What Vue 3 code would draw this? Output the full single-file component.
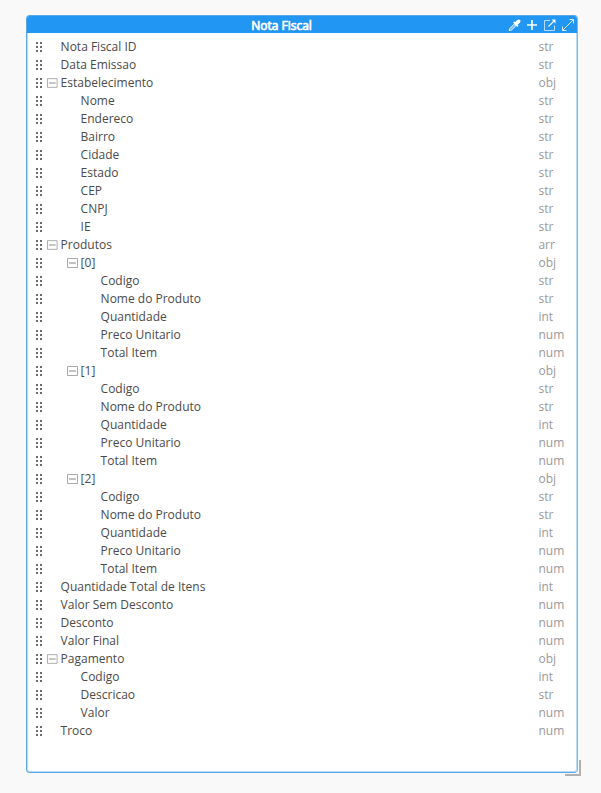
<script setup>
const item = ['Codigo:str', 'Nome do Produto:str', 'Quantidade:int', 'Preco Unitario:num', 'Total Item:num']
const make = (depth, list) => list.map((s) => {
  const [name, type] = s.split(':')
  return { depth, name, type, open: type === 'obj' || type === 'arr' }
})
const rows = [
  ...make(0, ['Nota Fiscal ID:str', 'Data Emissao:str', 'Estabelecimento:obj']),
  ...make(1, ['Nome:str', 'Endereco:str', 'Bairro:str', 'Cidade:str', 'Estado:str', 'CEP:str', 'CNPJ:str', 'IE:str']),
  ...make(0, ['Produtos:arr']),
  ...[0, 1, 2].flatMap((i) => [...make(1, [`[${i}]:obj`]), ...make(2, item)]),
  ...make(0, ['Quantidade Total de Itens:int', 'Valor Sem Desconto:num', 'Desconto:num', 'Valor Final:num', 'Pagamento:obj']),
  ...make(1, ['Codigo:int', 'Descricao:str', 'Valor:num']),
  ...make(0, ['Troco:num']),
]
</script>

<template>
  <main class="page">
    <section class="panel">
      <header class="bar">
        <h1 class="title">Nota Fiscal</h1>
        <div class="tools">
          <svg width="13" height="14" viewBox="0 0 13 14">
            <path d="M1 12.7 1.8 10.4 6 6.2 7.8 8 3.5 12Z" fill="#7cc0f9" stroke="#d9edfd" stroke-width="1" />
            <path d="M5 4.6 6.3 3.4 7.2 4.1 9.2 2Q10.8.8 12 2 13.1 3.3 11.8 4.7L9.8 6.6 10.5 7.7 9.3 9Z" fill="#fff" />
          </svg>
          <svg width="12" height="14" viewBox="0 0 12 14">
            <path d="M6 2V12M1 7H11" stroke="#fff" stroke-width="1.6" fill="none" />
          </svg>
          <svg width="13" height="14" viewBox="0 0 13 14">
            <path d="M7 2.5H1.5V12.5H11.5V7.5" stroke="#b9dcfb" stroke-width="1" fill="none" />
            <path d="M5.5 8.5 11.5 2.5" stroke="#fff" stroke-width="1.1" fill="none" />
            <path d="M8.5 1.5H12.5V5.5Z" fill="#fff" />
          </svg>
          <svg width="14" height="14" viewBox="0 0 14 14">
            <path d="M1.5 12.5 12.5 1.5M8.5 1.5H12.5V5.5M1.5 8.5V12.5H5.5" stroke="#d4eafd" stroke-width="1" fill="none" />
          </svg>
        </div>
      </header>
      <ul class="list">
        <li v-for="(r, i) in rows" :key="i" class="row">
          <svg class="grip" width="7" height="12" viewBox="0 0 7 12" fill="#6a6a6a">
            <path d="M0 1h2v2h-2zM4 1h2v2h-2zM0 5h2v2h-2zM4 5h2v2h-2zM0 9h2v2h-2zM4 9h2v2h-2z" />
          </svg>
          <span class="toggle" :class="'d' + r.depth">
            <svg v-if="r.open" width="11" height="12" viewBox="0 -1 11 12" fill="none">
              <path d="M.5.5H10.5V9.5H.5Z" stroke="#aaa" />
              <path d="M2 5H9" stroke="#888" />
            </svg>
          </span>
          <span class="name">{{ r.name }}</span>
          <span class="type">{{ r.type }}</span>
        </li>
      </ul>
      <svg class="resize" width="16" height="16" viewBox="0 0 16 16" fill="none">
        <path d="M15 0V15H0" stroke="#b0b0b0" stroke-width="2" />
      </svg>
    </section>
  </main>
</template>

<style>
body { background: #f9f9f9; }
</style>

<style scoped>
.page {
  box-sizing: border-box;
  height: 793px;
  padding: 15px 23px 20px 26px;
  font-family: "Open Sans", sans-serif;
  font-size: 12px;
  color: #4a4a4a;
}
.panel {
  position: relative;
  box-sizing: border-box;
  height: 758px;
  border: 1px solid #5ba7e3;
  border-right-color: #7db9ea;
  border-radius: 4px;
  background: #fff;
  box-shadow: inset 0 0 0 1px #b9dcf8;
}
.bar {
  display: grid;
  grid-template-columns: 1fr auto 1fr;
  align-items: center;
  height: 17px;
  border-radius: 3px 3px 0 0;
  background: #2196f3;
}
.title {
  grid-column: 2;
  margin: 0;
  padding: 1px 41px 0 0;
  color: #fff;
  font-size: 12px;
  font-weight: 400;
  line-height: 18px;
  -webkit-text-stroke: 0.7px #fff;
}
.tools {
  display: flex;
  justify-content: flex-end;
  gap: 5px;
  padding: 0 2px 1px 0;
}
.list {
  margin: 0;
  padding: 5px 0 0 9px;
  list-style: none;
}
.row {
  display: flex;
  align-items: center;
  height: 18px;
  line-height: 18px;
}
.grip { margin-right: 4px; }
.toggle {
  display: flex;
  justify-content: flex-end;
  box-sizing: border-box;
  padding-right: 3px;
}
.toggle svg { margin-left: auto; }
.d0 { width: 13.6px; }
.d1 { width: 33.6px; }
.d2 { width: 53.6px; }
.name { flex: 1; white-space: nowrap; }
.type { width: 38.6px; color: #999; }
.resize {
  position: absolute;
  right: -4px;
  bottom: -4px;
}
</style>
